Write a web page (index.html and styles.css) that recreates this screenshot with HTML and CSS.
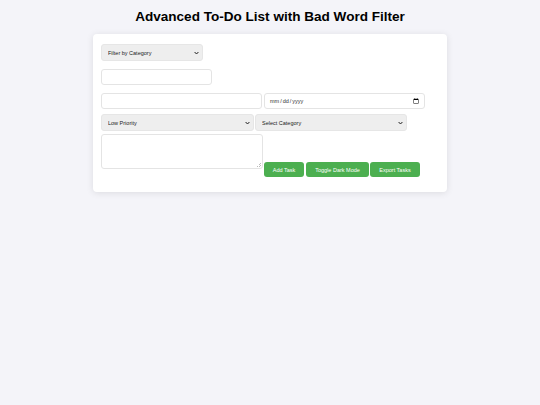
FILE: index.html
```html
<!DOCTYPE html>
<html lang="en">
<head>
<meta charset="utf-8">
<title>Advanced To-Do List with Bad Word Filter</title>
<link rel="stylesheet" href="styles.css">
</head>
<body>
<h1 class="title">Advanced To-Do List with Bad Word Filter</h1>
<main class="card">
  <div class="row row-filter">
    <select class="field select filter-select"><option>Filter by Category</option></select>
  </div>
  <div class="row row-search">
    <input class="field text search-input" type="text">
  </div>
  <div class="row row-main">
    <input class="field text task-input" type="text">
    <input class="field text date-input" type="date">
  </div>
  <div class="row row-selects">
    <select class="field select wide-select"><option>Low Priority</option></select>
    <select class="field select category-select"><option>Select Category</option></select>
  </div>
  <div class="row row-actions">
    <textarea class="field text notes"></textarea>
    <button class="btn btn-add">Add Task</button>
    <button class="btn btn-dark">Toggle Dark Mode</button>
    <button class="btn btn-export">Export Tasks</button>
  </div>
</main>
</body>
</html>
```

FILE: styles.css
```css
* { box-sizing: border-box; }
html, body { margin: 0; padding: 0; }
body {
  height: 405px;
  overflow: hidden;
  background: #f4f4f9;
  color: #000;
  font-family: "Liberation Sans", Arial, sans-serif;
  padding-top: 8px;
}
.title {
  margin: 0 0 9px;
  height: 17px;
  font-size: 13.55px;
  line-height: 17px;
  font-weight: 700;
  text-align: center;
}
.card {
  width: 354px;
  margin: 0 auto;
  padding: 10px 8px 15px;
  background: #fff;
  border-radius: 4px;
  box-shadow: 0 1px 7px rgba(0, 0, 0, 0.1);
}
.row { display: flex; align-items: flex-start; }
.row-search { margin-top: 8px; }
.row-main { margin-top: 8px; gap: 2px; }
.row-selects { margin-top: 5px; gap: 1px; }
.row-actions { margin-top: 3px; }
.field {
  margin: 0;
  font-family: "Liberation Sans", Arial, sans-serif;
  font-size: 5.5px;
  border-radius: 3px;
  outline: none;
}
.text { background: #fff; border: 1px solid #e4e4e4; }
.select {
  appearance: none;
  -webkit-appearance: none;
  height: 17px;
  padding: 0 3px 0 6px;
  background-color: #eee;
  background-image: url("data:image/svg+xml,%3Csvg xmlns='http://www.w3.org/2000/svg' width='5' height='4' viewBox='0 0 5 4'%3E%3Cpath d='M.6 1 2.5 3 4.4 1' fill='none' stroke='%23222' stroke-width='1'/%3E%3C/svg%3E");
  background-repeat: no-repeat;
  background-position: right 3px center;
  border: 1px solid #e6e6e6;
  color: #222;
}
.filter-select { width: 102px; }
.wide-select { width: 153px; }
.category-select { width: 152px; }
.search-input { width: 111px; height: 16px; }
.task-input { width: 161px; height: 16px; }
.date-input { width: 161px; height: 16px; padding: 0 4px; color: #333; }
.date-input::-webkit-calendar-picker-indicator { width: 6px; height: 6px; margin: 0 1px 0 0; padding: 0; }
.notes {
  width: 162px;
  height: 35px;
  display: block;
  resize: none;
  margin-right: 1px;
  background-image: linear-gradient(135deg, transparent 0 60%, #bbb 60% 68%, transparent 68% 80%, #bbb 80% 88%, transparent 88%);
  background-size: 5px 5px;
  background-position: right 1px bottom 1px;
  background-repeat: no-repeat;
}
.btn {
  height: 15px;
  padding: 0;
  margin-top: 28px;
  margin-right: 2px;
  border: 0;
  border-radius: 3px;
  background: #4caf50;
  color: #fff;
  font-family: "Liberation Sans", Arial, sans-serif;
  font-size: 5.5px;
}
.btn-add { width: 40px; }
.btn-dark { width: 63px; }
.btn-export { width: 50px; margin-right: 0; margin-left: -1px; }
```
